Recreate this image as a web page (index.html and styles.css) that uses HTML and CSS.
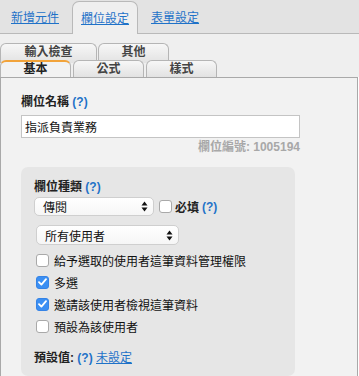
FILE: index.html
```html
<!DOCTYPE html>
<html lang="zh-Hant">
<head>
<meta charset="UTF-8">
<meta name="viewport" content="width=device-width, initial-scale=1.0">
<title>欄位設定</title>
<link rel="stylesheet" href="styles.css">
</head>
<body>
  <div class="topnav">
    <a class="toptab" href="#">新增元件</a>
    <a class="toptab active" href="#">欄位設定</a>
    <a class="toptab" href="#">表單設定</a>
  </div>

  <div class="subnav">
    <div class="tab-row back">
      <div class="subtab wide">輸入檢查</div>
      <div class="subtab">其他</div>
    </div>
    <div class="tab-row front">
      <div class="subtab current">基本</div>
      <div class="subtab">公式</div>
      <div class="subtab">樣式</div>
    </div>
  </div>

  <div class="panel">
    <div class="label">欄位名稱 <a class="help" href="#">(?)</a></div>
    <input class="text-input" type="text" value="指派負責業務">
    <div class="field-id">欄位編號: 1005194</div>

    <div class="box">
      <div class="label">欄位種類 <a class="help" href="#">(?)</a></div>
      <div class="type-row">
        <div class="select type-select">
          <span>傳閱</span>
          <svg class="arrows" width="7" height="11" viewBox="0 0 7 11"><path d="M3.5 0.5 L6.5 4.5 L0.5 4.5 Z M3.5 10.5 L6.5 6.5 L0.5 6.5 Z" fill="#111"/></svg>
        </div>
        <span class="check"></span>
        <span class="bold">必填</span>
        <a class="help" href="#">(?)</a>
      </div>
      <div class="select user-select">
        <span>所有使用者</span>
        <svg class="arrows" width="7" height="11" viewBox="0 0 7 11"><path d="M3.5 0.5 L6.5 4.5 L0.5 4.5 Z M3.5 10.5 L6.5 6.5 L0.5 6.5 Z" fill="#111"/></svg>
      </div>

      <div class="opt"><span class="check"></span>給予選取的使用者這筆資料管理權限</div>
      <div class="opt"><span class="check on"><svg width="9" height="8" viewBox="0 0 9 8"><path d="M1 4.2 L3.4 6.6 L8 1.2" fill="none" stroke="#fff" stroke-width="1.8" stroke-linecap="round" stroke-linejoin="round"/></svg></span>多選</div>
      <div class="opt"><span class="check on"><svg width="9" height="8" viewBox="0 0 9 8"><path d="M1 4.2 L3.4 6.6 L8 1.2" fill="none" stroke="#fff" stroke-width="1.8" stroke-linecap="round" stroke-linejoin="round"/></svg></span>邀請該使用者檢視這筆資料</div>
      <div class="opt"><span class="check"></span>預設為該使用者</div>

      <div class="default-row"><span class="bold">預設值:</span> <a class="help" href="#">(?)</a> <a class="link" href="#">未設定</a></div>
    </div>
  </div>
</body>
</html>
```

FILE: styles.css
```css
body {
  margin: 0;
  font-family: 'Liberation Sans', 'Noto Sans CJK TC', sans-serif;
  font-size: 12px;
  color: #222;
  background-color: #fff;
  width: 359px;
  height: 376px;
  overflow: hidden;
}

/* top tabs */
.topnav {
  display: flex;
  gap: 4px;
  height: 32px;
  padding: 1px 0 0 2px;
  background-color: #e3e3e3;
  border-bottom: 1px solid #b9b9b9;
}

.toptab {
  display: flex;
  align-items: center;
  padding: 0 8px;
  border: 1px solid transparent;
  border-bottom: none;
  color: #1f72c8;
  text-decoration: underline;
  line-height: 16px;
}

.toptab.active {
  background-color: #efefef;
  border-color: #b9b9b9;
  border-radius: 7px 7px 0 0;
  margin-bottom: -1px;
  padding-top: 1px;
}

/* sub tabs */
.subnav {
  background-color: #efefef;
  padding-top: 9px;
}

.tab-row {
  display: flex;
  height: 17px;
}

.subtab {
  width: 71px;
  margin-right: 2px;
  box-sizing: border-box;
  border: 1px solid #b5b5b5;
  border-bottom: none;
  border-radius: 6px 6px 0 0;
  background: linear-gradient(#f7f7f7, #e2e2e2);
  text-align: center;
  font-weight: bold;
  color: #444;
  line-height: 16px;
}

.subtab.wide {
  width: 97px;
  margin-right: 1px;
}

.tab-row.back .subtab {
  height: 20px;
}

.tab-row.front {
  position: relative;
}

.subtab.current {
  background: #f2f2f2;
  border-top: 2px solid #f2a33a;
  line-height: 15px;
  color: #222;
}

/* panel */
.panel {
  height: 300px;
  width: 358px;
  background-color: #f2f2f2;
  border: 1px solid #a9a9a9;
  border-bottom: none;
  padding: 16px 0 0 20px;
  box-sizing: border-box;
}

.label {
  font-weight: bold;
  line-height: 16px;
  color: #222;
}

.help {
  color: #1f72c8;
  font-weight: bold;
  text-decoration: none;
}

.bold {
  font-weight: bold;
}

.text-input {
  display: block;
  margin-top: 5px;
  width: 279px;
  height: 23px;
  box-sizing: border-box;
  border: 1px solid #c4c4c4;
  background-color: #fff;
  padding: 0 3px;
  font-family: inherit;
  font-size: 12px;
  color: #111;
}

.field-id {
  width: 279px;
  text-align: right;
  color: #a8a8a8;
  font-weight: bold;
  line-height: 16px;
  margin-top: 1px;
}

.box {
  margin-top: 12px;
  width: 274px;
  height: 209px;
  box-sizing: border-box;
  background-color: #e6e6e6;
  border-radius: 7px;
  padding: 12px 0 0 13px;
}

.type-row {
  display: flex;
  align-items: center;
  gap: 3px;
  margin-top: 2px;
  height: 19px;
}

.select {
  display: flex;
  align-items: center;
  justify-content: space-between;
  box-sizing: border-box;
  height: 19px;
  padding: 0 5px 0 8px;
  background: linear-gradient(#ffffff, #f6f6f6);
  border: 1px solid #cfcfcf;
  border-radius: 5px;
  color: #111;
}

.type-select {
  width: 120px;
  margin-right: 2px;
}

.user-select {
  width: 143px;
  height: 20px;
  margin: 9px 0 4px 2px;
}

.check {
  display: inline-flex;
  align-items: center;
  justify-content: center;
  width: 13px;
  height: 13px;
  box-sizing: border-box;
  border: 1px solid #a9a9a9;
  border-radius: 3px;
  background-color: #fff;
}

.check.on {
  background-color: #3b8ff3;
  border-color: #3583e6;
}

.opt {
  display: flex;
  align-items: center;
  gap: 5px;
  height: 22px;
  padding-left: 2px;
  color: #111;
}

.default-row {
  margin-top: 13px;
  line-height: 16px;
}

.link {
  color: #1f72c8;
  text-decoration: underline;
}
```
